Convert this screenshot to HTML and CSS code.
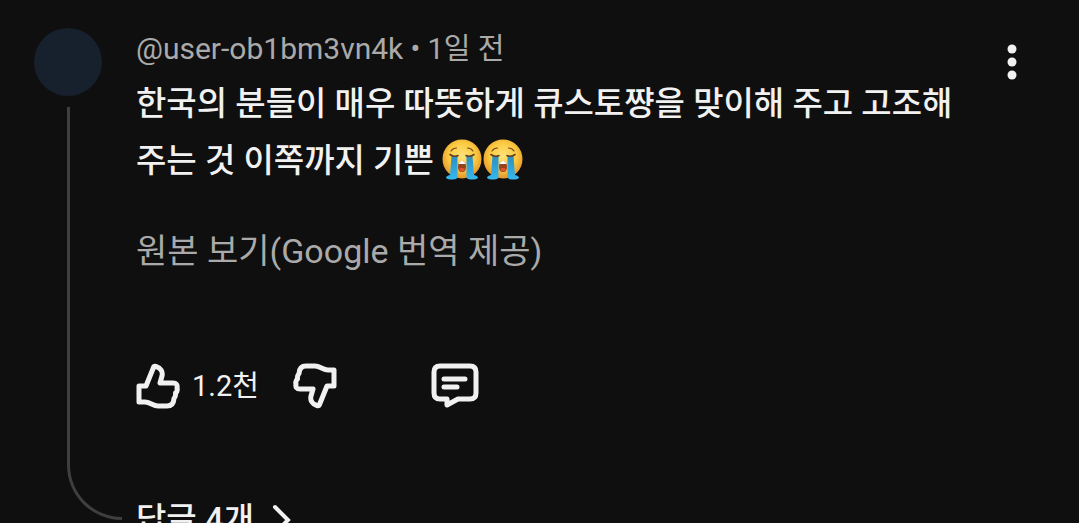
FILE: index.html
```html
<!DOCTYPE html>
<html lang="ko">
<head>
    <meta charset="UTF-8">
    <meta name="viewport" content="width=device-width, initial-scale=1.0">
    <title>댓글</title>
    <link rel="stylesheet" href="styles.css">
</head>
<body>

<!-- shared emoji drawing -->
<svg class="defs" width="0" height="0" aria-hidden="true">
    <defs>
        <radialGradient id="face" cx="50%" cy="42%" r="58%">
            <stop offset="0" stop-color="#ffe27a"/>
            <stop offset="0.6" stop-color="#fbc93f"/>
            <stop offset="1" stop-color="#e3952c"/>
        </radialGradient>
        <linearGradient id="tear" x1="0" y1="0" x2="0" y2="1">
            <stop offset="0" stop-color="#2b8fc0"/>
            <stop offset="1" stop-color="#38b8ee"/>
        </linearGradient>
        <symbol id="crying" viewBox="0 0 40 42">
            <circle cx="20" cy="20" r="19.5" fill="url(#face)"/>
            <path d="M9 12q2-3 5.500-3M31 12q-2-3-5.500-3" fill="none" stroke="#7b4b20" stroke-width="1.200" stroke-linecap="round"/>
            <path d="M9.500 17L8 36q-4 1-4 3 2 2 7 1.500 4.500 0 4.500-3V17zM30.500 17L32 36q4 1 4 3-2 2-7 1.500-4.500 0-4.500-3V17z" fill="url(#tear)"/>
            <path d="M8 15.500q4 3 8 1M32 15.500q-4 3-8 1" fill="none" stroke="#65401d" stroke-width="1.600" stroke-linecap="round"/>
            <path d="M16 28q0-6 4-6t4 6q0 5-4 5t-4-5z" fill="#96421f"/>
            <path d="M16.500 25q1-3 3.500-3t3.500 3z" fill="#fff"/>
            <path d="M17 30q3-2 6 0-1 2.500-3 2.500t-3-2.500z" fill="#e5532d"/>
        </symbol>
    </defs>
</svg>

<article class="comment">
    <div class="rail">
        <div class="avatar"></div>
        <div class="thread"></div>
    </div>

    <div class="content">
        <div class="meta"><a href="#">@user-ob1bm3vn4k</a> • 1일 전</div>
        <p class="text">한국의 분들이 매우 따뜻하게 큐스토쨩을 맞이해 주고 고조해 주는 것 이쪽까지 기쁜 <svg class="emoji" role="img" aria-label="😭"><use href="#crying"/></svg><svg class="emoji" role="img" aria-label="😭"><use href="#crying"/></svg></p>
        <button class="translate" type="button">원본 보기(Google 번역 제공)</button>

        <div class="actions">
            <button class="action like" type="button" aria-label="좋아요">
                <svg class="icon" viewBox="0 0 44 46">
                    <path d="M3 23H10L17.500 4.500Q18 3 20 3.500C25 5 27 9 26 13L24 20H37Q42 20 41 25Q42 28 39.500 30Q40 33 38 35.500Q37.500 43 31 43H22C17 43 14 39 9 39H3Z"/>
                </svg>
            </button>
            <span class="count">1.2천</span>
            <button class="action dislike" type="button" aria-label="싫어요">
                <svg class="icon" viewBox="0 0 44 46">
                    <path d="M41 23H34L26.500 41.500Q26 43 24 42.500C19 41 17 37 18 33L20 26H7Q2 26 3 21Q2 18 4.500 16Q4 13 6 10.500Q6.500 3 13 3H22C27 3 30 7 35 7H41Z"/>
                </svg>
            </button>
            <button class="action reply" type="button" aria-label="답글">
                <svg class="icon" viewBox="0 0 48 46">
                    <path d="M9 3H39Q45 3 45 9V30Q45 36 39 36H27L16 42V36H9Q3 36 3 30V9Q3 3 9 3Z"/>
                    <path d="M13 16H34M13 24H26"/>
                </svg>
            </button>
        </div>

        <button class="replies" type="button">
            답글 4개
            <svg class="chevron" viewBox="0 0 20 32"><path d="M3 3L16 16L3 29"/></svg>
        </button>
    </div>

    <button class="menu" type="button" aria-label="작업 메뉴">
        <svg viewBox="0 0 10 36">
            <circle cx="5" cy="5" r="4.500"/>
            <circle cx="5" cy="18" r="4.500"/>
            <circle cx="5" cy="31" r="4.500"/>
        </svg>
    </button>
</article>

</body>
</html>
```
FILE: styles.css
```css
body {
    margin: 0;
    height: 100vh;
    overflow: hidden;
    background-color: #0f0f0f;
    color: #f1f1f1;
    font-family: Roboto, "Noto Sans CJK KR", sans-serif;
}
button {
    padding: 0;
    border: none;
    background: none;
    color: inherit;
    font-family: inherit;
    cursor: pointer;
}
svg {
    display: block;
}
.defs {
    position: absolute;
}
.comment {
    display: flex;
    padding: 28px 62px 0 34px;
}
.rail {
    display: flex;
    flex-direction: column;
    flex: none;
    width: 88px;
    margin-right: 14px;
}
.avatar {
    width: 68px;
    height: 68px;
    border-radius: 50%;
    background-color: #17212d;
}
.thread {
    flex: 1;
    margin: 11px 0 20px 33px;
    border-left: 3px solid #3f3f3f;
    border-bottom: 3px solid #3f3f3f;
    border-bottom-left-radius: 56px;
}
.content {
    flex: 1;
    min-width: 0;
}
.meta {
    color: #aaa;
    font-size: 29px;
    line-height: 42px;
}
.meta a {
    color: inherit;
    font-size: 30px;
    text-decoration: none;
}
.text {
    margin: 5px 32px 34px 0;
    font-size: 33px;
    font-weight: 500;
    line-height: 57px;
    word-break: keep-all;
}
.emoji {
    display: inline-block;
    width: 40px;
    height: 42px;
    margin-right: 1px;
    vertical-align: -9px;
}
.translate {
    display: block;
    color: #aaa;
    font-size: 34px;
    line-height: 57px;
}
.actions {
    display: flex;
    align-items: center;
    margin-top: 83px;
}
.icon {
    width: 44px;
    height: 46px;
    fill: none;
    stroke: #f1f1f1;
    stroke-width: 5;
    stroke-linecap: round;
    stroke-linejoin: round;
}
.count {
    margin: 0 34px 0 12px;
    font-size: 29px;
    line-height: 46px;
}
.reply {
    margin-left: 94px;
}
.reply .icon {
    width: 48px;
}
.replies {
    display: flex;
    align-items: center;
    gap: 18px;
    margin-top: 91px;
    font-size: 33px;
    font-weight: 500;
    line-height: 40px;
}
.chevron {
    width: 20px;
    height: 32px;
    fill: none;
    stroke: #f1f1f1;
    stroke-width: 4;
    stroke-linecap: round;
}
.menu {
    align-self: flex-start;
    margin-top: 16px;
}
.menu svg {
    width: 10px;
    height: 36px;
    fill: #f1f1f1;
}
```
